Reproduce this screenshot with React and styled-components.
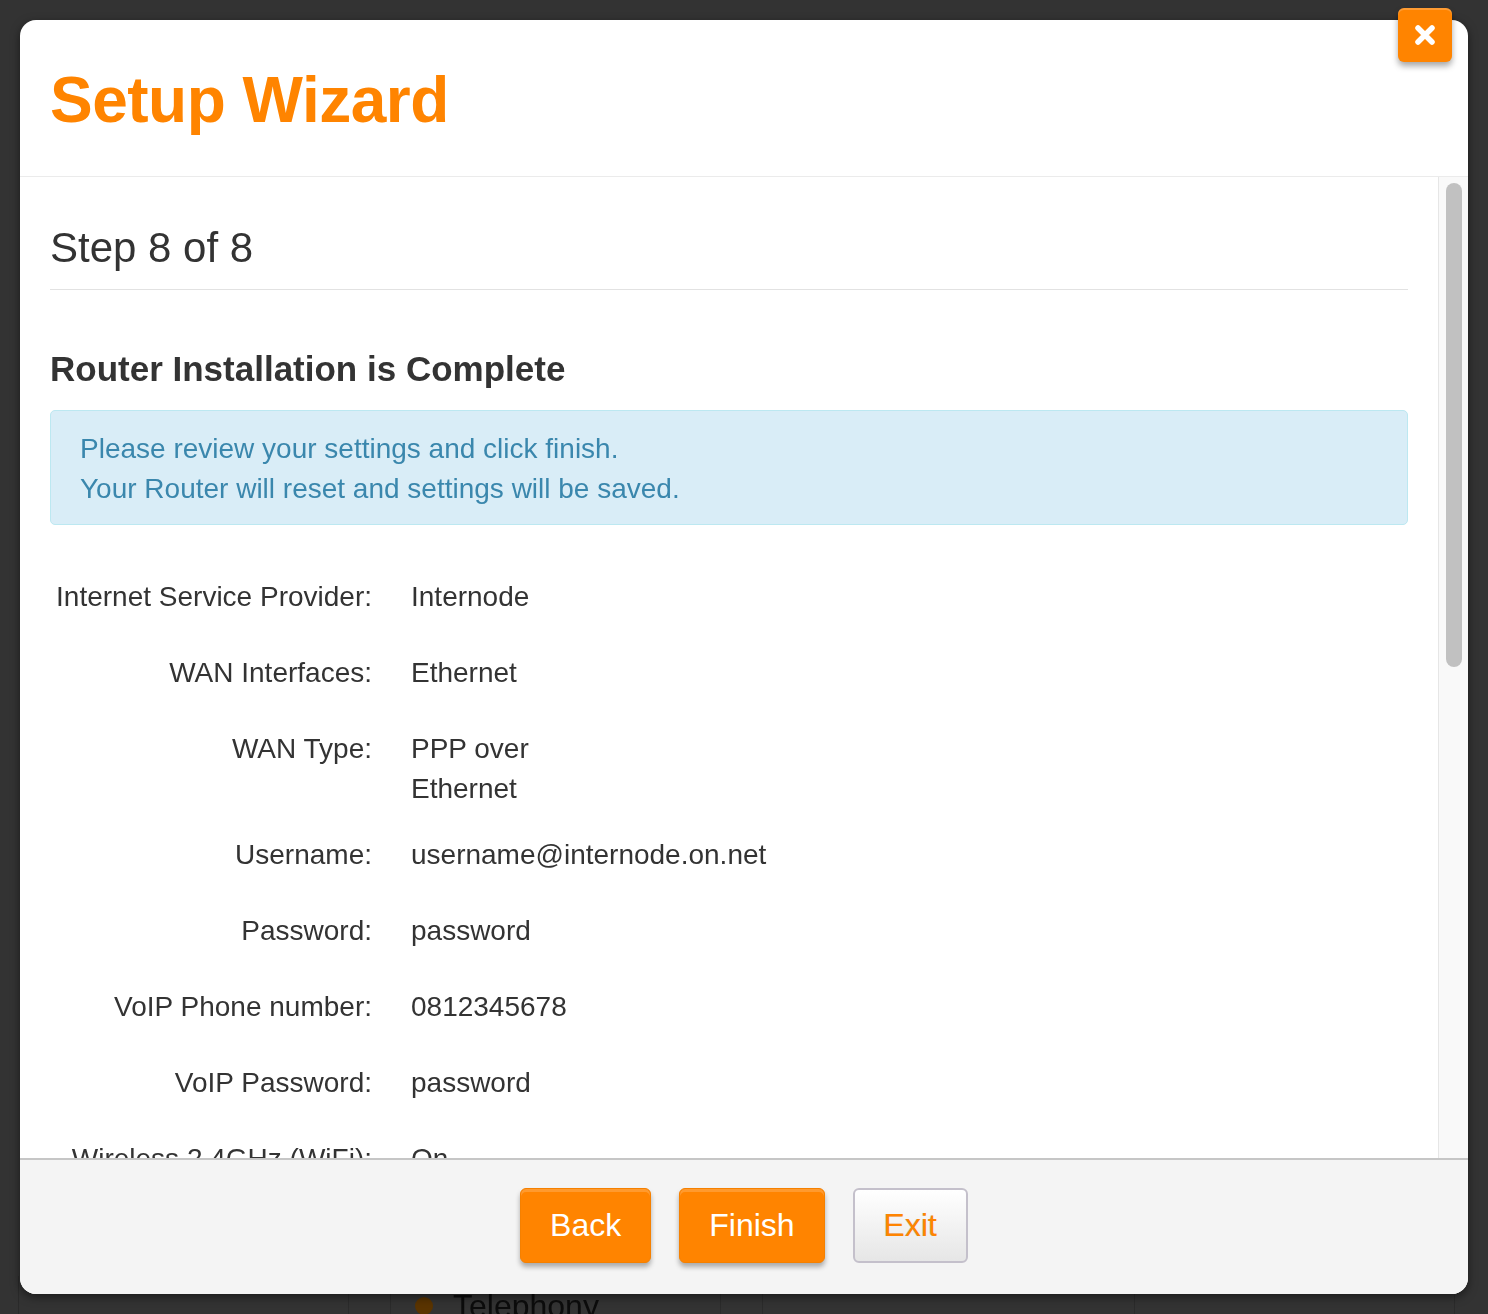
import React from 'react'
import styled, { createGlobalStyle } from 'styled-components'

const GlobalStyle = createGlobalStyle`
    html, body {
        margin: 0;
        padding: 0;
        background: #333;
        font-family: "Liberation Sans", Arial, Helvetica, sans-serif;
        color: #333;
    }
    * {
        box-sizing: border-box;
    }
`

const summary = [
    { label: 'Internet Service Provider:', value: 'Internode' },
    { label: 'WAN Interfaces:', value: 'Ethernet' },
    { label: 'WAN Type:', value: 'PPP over Ethernet' },
    { label: 'Username:', value: 'username@internode.on.net' },
    { label: 'Password:', value: 'password' },
    { label: 'VoIP Phone number:', value: '0812345678' },
    { label: 'VoIP Password:', value: 'password' },
    { label: 'Wireless 2.4GHz (WiFi):', value: 'On' },
    { label: 'Wireless 2.4GHz SSID:', value: 'Internode' },
    { label: 'Wireless 2.4GHz Key:', value: 'password' },
    { label: 'Wireless 5GHz (WiFi):', value: 'On' },
    { label: 'Wireless 5GHz SSID:', value: 'Internode-5G' },
    { label: 'Wireless 5GHz Key:', value: 'password' },
    { label: 'Time Zone:', value: 'Adelaide' },
    { label: 'Admin Username:', value: 'admin' },
    { label: 'Admin Password:', value: 'password' },
]

function CloseIcon() {
    return (
        <svg width="22" height="22" viewBox="0 0 22 22">
            <path d="M4 4 L18 18 M18 4 L4 18" stroke="#fff" strokeWidth="5.5" strokeLinecap="round" fill="none" />
        </svg>
    )
}

export default function App() {
    return (
        <>
            <GlobalStyle />
            {/* the page behind the dimmed overlay, only its bottom edge shows */}
            <Backdrop>
                <BackdropRow>
                    <BackdropCell w={330} />
                    <BackdropCell w={42} />
                    <BackdropCell w={330}>
                        <Dot />
                        Telephony
                    </BackdropCell>
                    <BackdropCell w={42} />
                    <BackdropCell w={372} />
                    <BackdropCell w={320} />
                </BackdropRow>
            </Backdrop>
            <Page>
                <Modal>
                    <CloseButton aria-label="Close">
                        <CloseIcon />
                    </CloseButton>
                    <Header>
                        <Title>Setup Wizard</Title>
                    </Header>
                    <BodyFrame>
                        <Body>
                            <StepTitle>Step 8 of 8</StepTitle>
                            <Heading>Router Installation is Complete</Heading>
                            <Alert>
                                Please review your settings and click finish.
                                <br />
                                Your Router will reset and settings will be saved.
                            </Alert>
                            <Summary>
                                {summary.map(row => (
                                    <React.Fragment key={row.label}>
                                        <Label>{row.label}</Label>
                                        <Value>{row.value}</Value>
                                    </React.Fragment>
                                ))}
                            </Summary>
                        </Body>
                        <ScrollTrack>
                            <ScrollThumb size={484} />
                        </ScrollTrack>
                    </BodyFrame>
                    <Footer>
                        <Button>Back</Button>
                        <Button>Finish</Button>
                        <Button secondary>Exit</Button>
                    </Footer>
                </Modal>
            </Page>
        </>
    )
}

const Backdrop = styled.div`
    position: fixed;
    inset: 0;
    display: flex;
    flex-direction: column;
    justify-content: flex-end;
    padding: 0 18px;
    background: #333;
`

const BackdropRow = styled.div`
    display: flex;
    height: 60px;
    border-left: 1px solid #2a2a2a;
    margin-bottom: -22px;
`

const BackdropCell = styled.div`
    width: ${props => props.w}px;
    border-right: 1px solid #2b2b2b;
    display: flex;
    align-items: center;
    padding-left: 24px;
    font-size: 32px;
    color: #0c0c0c;
`

const Dot = styled.span`
    width: 18px;
    height: 18px;
    border-radius: 50%;
    background: #5a3400;
    margin-right: 20px;
`

const Page = styled.div`
    position: relative;
    padding: 20px;
`

const Modal = styled.div`
    position: relative;
    height: 1274px;
    display: flex;
    flex-direction: column;
    background: #fff;
    border-radius: 16px;
    box-shadow: 0 3px 10px rgba(0, 0, 0, 0.5);
`

const CloseButton = styled.button`
    position: absolute;
    top: -12px;
    right: 16px;
    width: 54px;
    height: 54px;
    display: flex;
    align-items: center;
    justify-content: center;
    padding: 0;
    border: none;
    border-radius: 6px;
    background: #ff8400;
    box-shadow: 0 4px 6px rgba(0, 0, 0, 0.35), inset 0 2px 0 rgba(255, 255, 255, 0.2);
    cursor: pointer;
`

const Header = styled.div`
    padding: 48px 30px 44px;
    border-bottom: 1px solid #ebebeb;
`

const Title = styled.h1`
    margin: 0;
    font-size: 64px;
    line-height: 64px;
    font-weight: bold;
    color: #ff8400;
    letter-spacing: -0.5px;
`

const BodyFrame = styled.div`
    flex: 1;
    min-height: 0;
    display: flex;
`

const Body = styled.div`
    flex: 1;
    overflow: hidden;
    padding: 49px 30px 40px;
`

const ScrollTrack = styled.div`
    width: 30px;
    flex-shrink: 0;
    padding: 6px 6px 0 7px;
    background: #f9f9f9;
    border-left: 1px solid #e6e6e6;
`

const ScrollThumb = styled.div`
    height: ${props => props.size}px;
    border-radius: 8px;
    background: #c1c1c1;
`

const StepTitle = styled.h2`
    margin: 0;
    padding-bottom: 19px;
    border-bottom: 1px solid #e2e2e2;
    font-size: 42px;
    line-height: 44px;
    font-weight: normal;
    color: #333;
`

const Heading = styled.h3`
    margin: 59px 0 21px;
    font-size: 35px;
    line-height: 40px;
    font-weight: bold;
    color: #333;
`

const Alert = styled.div`
    padding: 18px 29px 15px;
    border: 1px solid #bce8f1;
    border-radius: 5px;
    background: #d9edf7;
    color: #3a87ad;
    font-size: 28px;
    line-height: 40px;
`

const Summary = styled.div`
    display: grid;
    grid-template-columns: 322px 150px;
    column-gap: 39px;
    align-items: start;
    margin-top: 34px;
    font-size: 28px;
    line-height: 40px;
    color: #333;
`

const Label = styled.div`
    padding: 18px 0;
    text-align: right;
    white-space: nowrap;
`

const Value = styled.div`
    padding: 18px 0 8px;
`

const Footer = styled.div`
    display: flex;
    justify-content: center;
    align-items: flex-start;
    gap: 28px;
    padding-top: 28px;
    height: 136px;
    border-top: 2px solid #c6c6c6;
    border-radius: 0 0 16px 16px;
    background: #f4f4f4;
`

const Button = styled.button`
    height: 75px;
    padding: 0 29px;
    font-family: "Liberation Sans", Arial, Helvetica, sans-serif;
    font-size: 32px;
    border-radius: 6px;
    cursor: pointer;
    color: ${props => (props.secondary ? '#ff8400' : '#fff')};
    background: ${props => (props.secondary ? 'linear-gradient(#ffffff, #e6e6e6)' : '#ff8400')};
    border: ${props => (props.secondary ? '2px solid #c4c0cb' : '1px solid #f58000')};
    box-shadow: ${props =>
        props.secondary
            ? 'none'
            : '0 4px 5px rgba(0, 0, 0, 0.3), inset 0 3px 0 rgba(255, 255, 255, 0.18)'};
    text-shadow: ${props => (props.secondary ? '-1px 0 0 rgba(0, 0, 0, 0.18)' : 'none')};
`
